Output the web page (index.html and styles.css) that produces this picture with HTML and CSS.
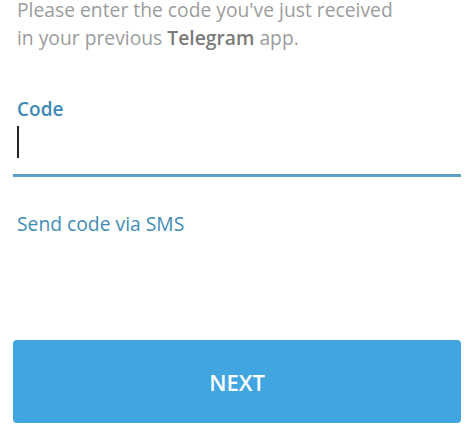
FILE: index.html
```html
<!DOCTYPE html>
<html>
<head>
<meta charset="utf-8">
<link rel="stylesheet" href="styles.css">
</head>
<body>
<div class="page">
  <div class="intro">
    <span class="line">Please enter the code you've just received</span>
    <span class="line">in your previous <b>Telegram</b> app.</span>
  </div>
  <div class="field">
    <label class="label">Code</label>
    <div class="input"><span class="caret"></span></div>
  </div>
  <a class="sms">Send code via SMS</a>
  <button class="next">NEXT</button>
</div>
</body>
</html>
```
FILE: styles.css
```css
html, body { margin: 0; padding: 0; background: #fff; }
body { font-family: "Open Sans", "DejaVu Sans", sans-serif; }
.page {
  display: flex;
  flex-direction: column;
  padding: 0 13px;
  width: 448px;
}
.intro {
  display: flex;
  flex-direction: column;
  gap: 8px;
  margin-left: 4px;
  font-size: 19.3px;
  color: #9c9c9c;
}
.line { line-height: 20px; white-space: nowrap; }
.intro b { font-weight: 600; color: #7a7a7a; }
.field {
  margin-top: 49px;
  display: flex;
  flex-direction: column;
}
.label {
  margin-left: 4px;
  font-size: 19px;
  font-weight: 600;
  color: #3d8ab6;
  line-height: 24px;
}
.input {
  height: 53px;
  border-bottom: 3px solid #5a9fc4;
  position: relative;
}
.caret {
  position: absolute;
  left: 4px;
  top: 5px;
  width: 1.5px;
  height: 32px;
  background: #222;
}
.sms {
  margin: 35px 0 0 4px;
  font-size: 19.3px;
  line-height: 24px;
  color: #3f8db5;
}
.next {
  margin-top: 104px;
  height: 83px;
  border: none;
  border-radius: 4px;
  background: #41a6e0;
  color: #fff;
  font-family: inherit;
  font-size: 22px;
  font-weight: 600;
}
```
